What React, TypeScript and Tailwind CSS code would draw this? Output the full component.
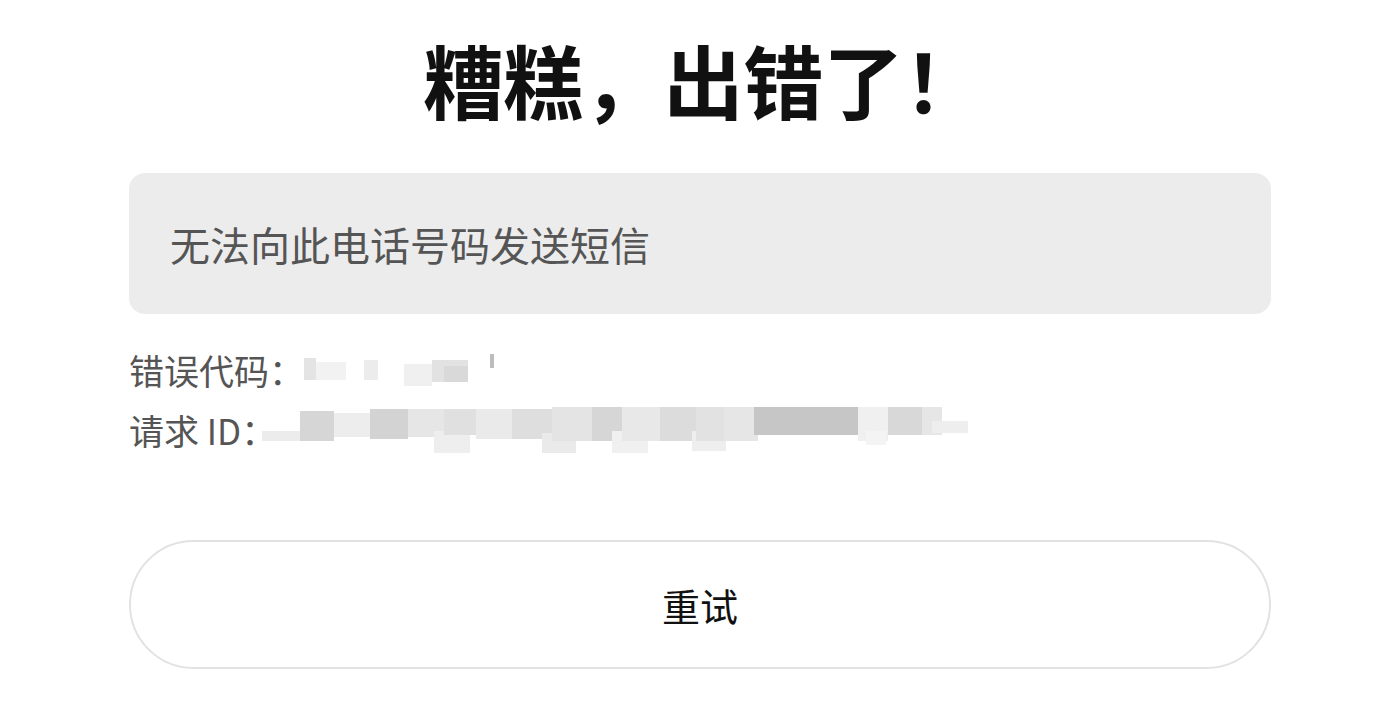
import React from "react";

const codeBlocks: [number, number, number, number, string][] = [
  // x, y, w, h, fill (relative to svg)
  [0, 4, 12, 22, "#e4e4e4"],
  [12, 8, 30, 18, "#f2f2f2"],
  [60, 6, 14, 20, "#ececec"],
  [100, 10, 28, 22, "#f0f0f0"],
  [128, 6, 36, 22, "#e2e2e2"],
  [140, 12, 24, 16, "#d9d9d9"],
  [186, 0, 4, 14, "#bdbdbd"],
];

const requestBlocks: [number, number, number, number, string][] = [
  [0, 26, 44, 10, "#ececec"],
  [38, 6, 34, 30, "#d6d6d6"],
  [72, 8, 36, 24, "#ededed"],
  [108, 4, 38, 30, "#d3d3d3"],
  [146, 4, 36, 28, "#e6e6e6"],
  [172, 26, 36, 22, "#eeeeee"],
  [182, 4, 32, 26, "#e0e0e0"],
  [214, 4, 38, 30, "#eaeaea"],
  [250, 4, 40, 30, "#dedede"],
  [280, 28, 34, 20, "#eaeaea"],
  [290, 2, 40, 34, "#e4e4e4"],
  [330, 2, 30, 34, "#d6d6d6"],
  [350, 26, 36, 22, "#f0f0f0"],
  [360, 2, 38, 34, "#e8e8e8"],
  [398, 2, 36, 34, "#dcdcdc"],
  [430, 26, 34, 20, "#eeeeee"],
  [434, 2, 36, 34, "#e2e2e2"],
  [462, 2, 34, 34, "#e6e6e6"],
  [492, 2, 104, 28, "#c6c6c6"],
  [596, 2, 30, 34, "#f0f0f0"],
  [604, 26, 20, 14, "#f4f4f4"],
  [626, 2, 34, 28, "#d8d8d8"],
  [660, 2, 20, 28, "#e6e6e6"],
  [670, 16, 36, 12, "#eeeeee"],
];

const Mosaic: React.FC<{ w: number; h: number; blocks: [number, number, number, number, string][]; className?: string }> = ({ w, h, blocks, className }) => (
  <svg width={w} height={h} viewBox={`0 0 ${w} ${h}`} className={className}>
    {blocks.map(([x, y, bw, bh, fill], i) => (
      <rect key={i} x={x} y={y} width={bw} height={bh} fill={fill} />
    ))}
  </svg>
);

const App: React.FC = () => {
  return (
    <div
      className="min-h-screen bg-white text-[#111]"
      style={{ fontFamily: '"Noto Sans CJK SC", "Noto Sans", sans-serif' }}
    >
      <h1 className="pl-[28px] pt-[38px] text-center text-[80px] font-bold leading-none text-[#111]">
        糟糕，出错了！
      </h1>
      <div className="pl-[129px] pr-[108px]">
        <div className="mt-[55px] flex h-[141px] items-center rounded-[16px] bg-[#ececec] px-[41px] text-[40px] text-[#555]">
          无法向此电话号码发送短信
        </div>
        <div className="mt-[26px] text-[35px] leading-[60px] text-[#555]">
          <div className="flex items-center">
            <span>错误代码：</span>
            <Mosaic w={196} h={32} blocks={codeBlocks} />
          </div>
          <div className="flex items-center">
            <span>请求 ID：</span>
            <Mosaic w={708} h={50} blocks={requestBlocks} className="-ml-[14px]" />
          </div>
        </div>
        <button className="mt-[80px] flex h-[129px] w-full items-center justify-center rounded-full border-2 border-[#e2e2e2] bg-white text-[38px] text-[#111]">
          重试
        </button>
      </div>
    </div>
  );
};

export default App;
